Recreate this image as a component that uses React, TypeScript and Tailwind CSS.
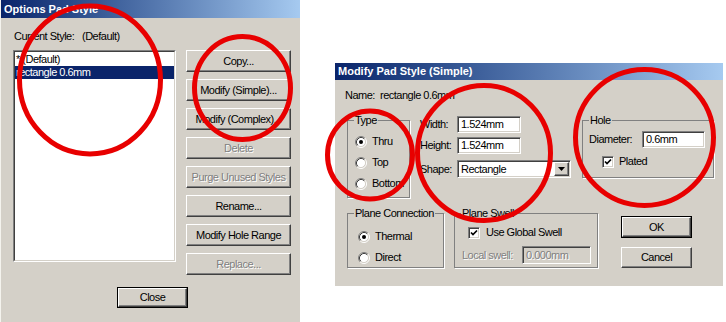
import React from "react";

const font = "font-['Liberation_Sans',Arial,sans-serif] text-[11px] tracking-[-0.5px] leading-[13px] text-black";
const raised =
  "bg-[#d4d0c8] border border-t-white border-l-white border-r-[#404040] border-b-[#404040] shadow-[inset_-1px_-1px_0_#808080,inset_1px_1px_0_#d4d0c8]";
const sunken =
  "border border-t-[#808080] border-l-[#808080] border-r-white border-b-white shadow-[inset_1px_1px_0_#404040,inset_-1px_-1px_0_#d4d0c8]";
const greyed = "text-[#808080] [text-shadow:1px_1px_0_#fff]";
const group = "border border-[#808080] shadow-[1px_1px_0_#fff]";

function Radio({ checked }: { checked?: boolean }) {
  return (
    <svg width="12" height="12" viewBox="0 0 12 12" className="shrink-0">
      <circle cx="6" cy="6" r="4.5" fill="#fff" />
      <path d="M2.11 9.89A5.5 5.5 0 0 1 9.89 2.11" fill="none" stroke="#808080" />
      <path d="M9.89 2.11A5.5 5.5 0 0 1 2.11 9.89" fill="none" stroke="#fff" />
      <path d="M2.82 9.18A4.5 4.5 0 0 1 9.18 2.82" fill="none" stroke="#404040" />
      <path d="M9.18 2.82A4.5 4.5 0 0 1 2.82 9.18" fill="none" stroke="#d4d0c8" />
      {checked && <circle cx="6" cy="6" r="2" fill="#000" />}
    </svg>
  );
}

function Check({ checked }: { checked?: boolean }) {
  return (
    <div className={`w-[12px] h-[12px] bg-white shrink-0 flex items-center justify-center ${sunken}`}>
      {checked && (
        <svg width="8" height="8" viewBox="0 0 8 8">
          <path d="M1 3.5 L3 5.5 L7 1.5" stroke="#000" strokeWidth="1.7" fill="none" />
        </svg>
      )}
    </div>
  );
}

function Button({
  label,
  disabled,
  className = "",
}: {
  label: string;
  disabled?: boolean;
  className?: string;
}) {
  return (
    <div className={`flex items-center justify-center ${raised} ${disabled ? greyed : ""} ${className}`}>
      {label}
    </div>
  );
}

function DefaultButton({ label, className = "" }: { label: string; className?: string }) {
  return (
    <div className={`border border-black flex ${className}`}>
      <div className={`flex-1 flex items-center justify-center ${raised}`}>{label}</div>
    </div>
  );
}

function RadioRow({ label, checked }: { label: string; checked?: boolean }) {
  return (
    <div className="flex items-center gap-[5px] h-[13px]">
      <Radio checked={checked} />
      <span>{label}</span>
    </div>
  );
}

function TitleBar({ title, className = "" }: { title: string; className?: string }) {
  return (
    <div
      className={`bg-linear-to-r from-[#0a246a] to-[#a6caf0] text-white font-bold tracking-normal px-[3px] flex items-center ${className}`}
    >
      {title}
    </div>
  );
}

function OptionsPadStyle() {
  const buttons = [
    { label: "Copy..." },
    { label: "Modify (Simple)..." },
    { label: "Modify (Complex)..." },
    { label: "Delete", disabled: true },
    { label: "Purge Unused Styles", disabled: true },
    { label: "Rename..." },
    { label: "Modify Hole Range" },
    { label: "Replace...", disabled: true },
  ];

  return (
    <div className="w-[300px] h-[322px] shrink-0 bg-[#d4d0c8] border-l border-l-[#f4f3ee] flex flex-col">
      <TitleBar title="Options Pad Style" className="h-[18px]" />

      <div className="pl-[12px] flex flex-col">
        <div className="mt-[12px] pl-[1px] flex h-[13px]">
          <span className="w-[68px]">Current Style:</span>
          <span>(Default)</span>
        </div>

        <div className="mt-[7px] flex items-start">
          <div className="w-[163px] h-[212px] flex border border-[#808080] border-r-white border-b-white">
            <div className="flex-1 bg-white border border-[#404040] border-r-[#d4d0c8] border-b-[#d4d0c8] pt-[1px]">
              <div className="h-[13px] px-[1px]">* (Default)</div>
              <div className="h-[13px] px-[1px] bg-[#0a246a] text-white">rectangle 0.6mm</div>
            </div>
          </div>

          <div className="ml-[10px] w-[105px] flex flex-col gap-[7px]">
            {buttons.map((b) => (
              <Button key={b.label} label={b.label} disabled={b.disabled} className="h-[22px]" />
            ))}
          </div>
        </div>

        <DefaultButton label="Close" className="mt-[12px] ml-[104px] w-[71px] h-[21px]" />
      </div>
    </div>
  );
}

function ModifyPadStyle() {
  return (
    <div className="ml-[35px] mt-[63px] w-[388px] h-[223px] shrink-0 bg-[#d4d0c8] flex flex-col">
      <TitleBar title="Modify Pad Style (Simple)" className="h-[17px]" />

      <div className="mt-[9px] pl-[10px] flex h-[13px]">
        <span className="w-[35px]">Name:</span>
        <span>rectangle 0.6mm</span>
      </div>

      {/* type / size / hole */}
      <div className="mt-[12px] pl-[12px] flex items-start">
        <fieldset className={`w-[63px] h-[84px] ${group}`}>
          <legend className="ml-[6px] px-[1px]">Type</legend>
          <div className="pt-[8px] pl-[7px] flex flex-col gap-[8px]">
            <RadioRow label="Thru" checked />
            <RadioRow label="Top" />
            <RadioRow label="Bottom" />
          </div>
        </fieldset>

        <div className="ml-[10px] flex flex-col">
          <div className="mt-[2px] flex items-center">
            <span className="w-[37px]">Width:</span>
            <div className={`w-[64px] h-[17px] bg-white pl-[3px] flex items-center ${sunken}`}>1.524mm</div>
          </div>
          <div className="mt-[4px] flex items-center">
            <span className="w-[37px]">Height:</span>
            <div className={`w-[64px] h-[17px] bg-white pl-[3px] flex items-center ${sunken}`}>1.524mm</div>
          </div>
          <div className="mt-[6px] flex items-center">
            <span className="w-[37px]">Shape:</span>
            <div className={`w-[114px] h-[18px] bg-white pl-[3px] pr-[1px] py-[1px] flex items-center ${sunken}`}>
              <span className="flex-1">Rectangle</span>
              <div className={`w-[15px] h-full flex items-center justify-center ${raised}`}>
                <svg width="7" height="4" viewBox="0 0 7 4">
                  <path d="M0 0 H7 L3.5 4 Z" fill="#000" />
                </svg>
              </div>
            </div>
          </div>
        </div>

        <fieldset className={`ml-[11px] w-[132px] h-[64px] ${group}`}>
          <legend className="ml-[6px] px-[1px]">Hole</legend>
          <div className="mt-[4px] pl-[6px] flex items-center">
            <span className="w-[53px]">Diameter:</span>
            <div className={`w-[63px] h-[17px] bg-white pl-[3px] flex items-center ${sunken}`}>0.6mm</div>
          </div>
          <div className="mt-[7px] pl-[19px] flex items-center gap-[5px] h-[13px]">
            <Check checked />
            <span>Plated</span>
          </div>
        </fieldset>
      </div>

      {/* plane connection / swell / ok cancel */}
      <div className="mt-[9px] pl-[12px] flex items-start">
        <fieldset className={`w-[97px] h-[61px] ${group}`}>
          <legend className="ml-[6px] px-[1px]">Plane Connection</legend>
          <div className="pt-[10px] pl-[10px] flex flex-col gap-[8px]">
            <RadioRow label="Thermal" checked />
            <RadioRow label="Direct" />
          </div>
        </fieldset>

        <fieldset className={`ml-[10px] w-[144px] h-[61px] ${group}`}>
          <legend className="ml-[6px] px-[1px]">Plane Swell</legend>
          <div className="pt-[6px] pl-[13px] flex items-center gap-[6px] h-[19px]">
            <Check checked />
            <span>Use Global Swell</span>
          </div>
          <div className="mt-[7px] pl-[7px] flex items-center">
            <span className={`w-[60px] ${greyed}`}>Local swell:</span>
            <div className={`w-[69px] h-[18px] bg-[#d4d0c8] pl-[3px] flex items-center ${sunken} ${greyed}`}>
              0.000mm
            </div>
          </div>
        </fieldset>

        <div className="ml-[23px] w-[71px] flex flex-col">
          <DefaultButton label="OK" className="mt-[9px] h-[22px]" />
          <Button label="Cancel" className="mt-[9px] h-[21px]" />
        </div>
      </div>
    </div>
  );
}

export default function App() {
  return (
    <div className={`relative w-[726px] h-[322px] bg-white overflow-hidden flex items-start ${font}`}>
      <OptionsPadStyle />
      <ModifyPadStyle />

      {/* red annotation rings */}
      <svg
        className="absolute inset-0 pointer-events-none"
        width="726"
        height="322"
        viewBox="0 0 726 322"
      >
        <g fill="none" stroke="#e80000" strokeWidth="5">
          <ellipse cx="90" cy="80" rx="70.5" ry="74" />
          <ellipse cx="242.5" cy="88" rx="48" ry="51.5" />
          <ellipse cx="370" cy="155" rx="42.5" ry="44" />
          <ellipse cx="484" cy="153" rx="66.5" ry="67.5" />
          <ellipse cx="644.5" cy="137.5" rx="69" ry="68" />
        </g>
      </svg>
    </div>
  );
}
